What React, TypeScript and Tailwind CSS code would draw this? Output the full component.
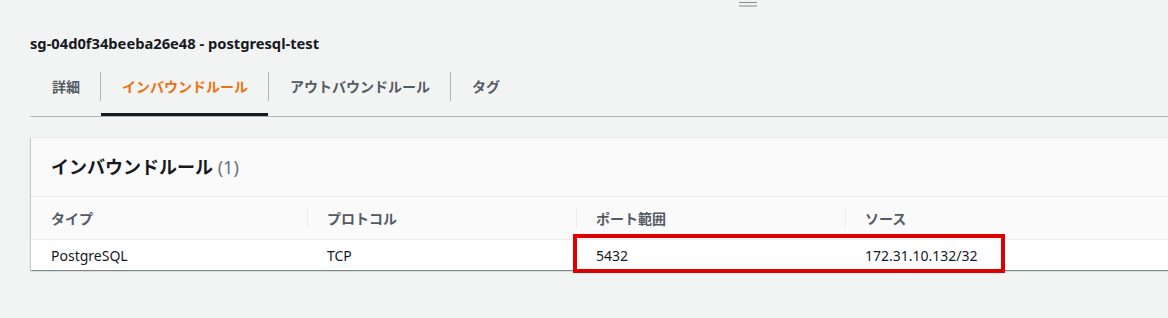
import React from 'react';

const tabs = ['詳細', 'インバウンドルール', 'アウトバウンドルール', 'タグ'];
const columns = ['タイプ', 'プロトコル', 'ポート範囲', 'ソース'];
const rows = [['PostgreSQL', 'TCP', '5432', '172.31.10.132/32']];

const font = { fontFamily: '"Noto Sans", "Noto Sans CJK JP", sans-serif' };

export default function App() {
  const active = 1;

  return (
    <div className="relative h-[318px] overflow-hidden bg-[#f2f3f3] text-[#16191f]" style={font}>
      {/* split-panel drag handle */}
      <div className="absolute left-[739px] top-[2px] flex w-[18px] flex-col gap-[2px]">
        <div className="h-px bg-[#8d8d8d]"></div>
        <div className="h-[2px] bg-[#bdbdbd]"></div>
      </div>

      <div className="pl-[30px] pt-[33px]">
        <h2 className="text-[14.7px] font-bold leading-[20px]">sg-04d0f34beeba26e48 - postgresql-test</h2>

        {/* Tabs */}
        <div className="mt-[19px] flex items-start border-b border-[#aab7b8] pl-px">
          {tabs.map((t, i) => (
            <React.Fragment key={t}>
              {i > 0 && <div className="h-[29px] w-px bg-[#aab7b8]"></div>}
              <div className={`flex h-[44px] items-start ${i === active ? 'border-b-[3px] border-[#16191f]' : ''}`}>
                <span
                  className={`flex h-[29px] items-center pl-[21px] pr-[20px] text-[14px] font-bold ${
                    i === active ? 'text-[#ec7211]' : 'text-[#545b64]'
                  }`}
                >
                  {t}
                </span>
              </div>
            </React.Fragment>
          ))}
        </div>

        {/* Rules panel */}
        <div className="ml-px mt-[20px] w-[1200px] border-t border-[#eaeded] bg-white shadow-[0_1px_1px_0_rgba(0,28,36,0.3),1px_1px_1px_0_rgba(0,28,36,0.15),-1px_1px_1px_0_rgba(0,28,36,0.15)]">
          <div className="border-b border-[#eaeded] bg-[#fafafa] px-[20px] py-[17px]">
            <h3 className="text-[18px] font-bold leading-[24px]">
              インバウンドルール <span className="font-normal text-[#687078]">(1)</span>
            </h3>
          </div>

          <div className="grid grid-cols-[276px_269px_269px_1fr] border-b border-[#eaeded] bg-[#fafafa]">
            {columns.map((c, i) => (
              <div key={c} className="flex h-[42px] items-center">
                {i > 0 && <div className="h-[20px] w-px bg-[#eaeded]"></div>}
                <span className={`text-[14px] font-bold text-[#545b64] ${i > 0 ? 'pl-[19px]' : 'pl-[20px]'}`}>{c}</span>
              </div>
            ))}
          </div>

          {rows.map((r) => (
            <div key={r[0]} className="relative grid h-[30px] grid-cols-[276px_269px_269px_1fr] items-center bg-white">
              {r.map((v, i) => (
                <span key={i} className="pl-[20px] text-[14px] text-[#16191f]">
                  {v}
                </span>
              ))}
              {/* highlight annotation */}
              <div className="absolute left-[542px] top-[-6px] h-[39px] w-[432px] border-4 border-[#df0000]"></div>
            </div>
          ))}
        </div>
      </div>
    </div>
  );
}
